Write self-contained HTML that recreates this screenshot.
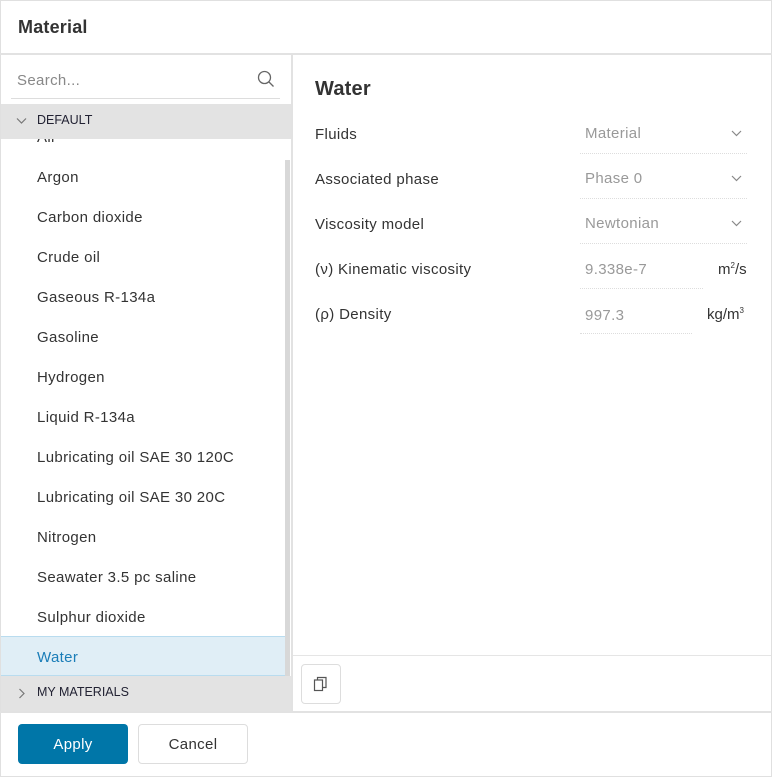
<!DOCTYPE html>
<html><head><style>
*{box-sizing:border-box;margin:0;padding:0}
body{width:772px;height:777px;background:#fff;font-family:"Liberation Sans",sans-serif;color:#333;position:relative;overflow:hidden;letter-spacing:0.35px}
.frame{position:absolute;left:0;top:0;width:772px;height:777px;border:1px solid #e0e0e0}
.hdr{position:absolute;left:18px;top:17px;font-size:18px;font-weight:bold;color:#333;letter-spacing:0.2px}
.hline{position:absolute;left:0;top:53px;width:772px;height:2px;background:#e2e2e2}
.left{position:absolute;left:1px;top:55px;width:290px;height:656px;overflow:hidden}
.sep{position:absolute;left:291px;top:55px;width:2px;height:656px;background:#e2e2e2}
.search{position:absolute;left:16px;top:17px;font-size:15px;color:#888}
.sline{position:absolute;left:10px;top:43px;width:269px;height:1px;background:#ddd}
.grp{position:absolute;left:0;width:290px;height:35px;background:#e3e3e3;font-size:12.5px;color:#223;letter-spacing:0}
.grp span{position:absolute;left:36px;top:9px}
.item{position:absolute;left:0;width:284px;height:40px;font-size:15px;padding:13px 0 0 36px;color:#333}
.sel{background:#e0eef6;border-top:1px solid #b9dcef;border-bottom:1px solid #b9dcef;color:#1a7db8;padding-top:12px}
.sb{position:absolute;left:284px;top:105px;width:5px;height:516px;background:#d8d8d8}
.lbl{position:absolute;left:315px;font-size:15px;color:#333}
.val{position:absolute;left:585px;font-size:15px;color:#999}
.ul{position:absolute;left:580px;height:1px;border-top:1px dotted #ddd}
.chev{position:absolute;left:731px}
.btn{position:absolute;top:724px;height:40px;border-radius:4px;font-size:15px;text-align:center;line-height:42px}
</style></head><body>
<div class="frame"></div>
<div class="hdr">Material</div>
<div class="hline"></div>
<div class="left">
 <div class="search">Search...</div>
 <svg style="position:absolute;left:256px;top:15px" width="18" height="18" viewBox="0 0 18 18"><circle cx="7.5" cy="7.5" r="6" fill="none" stroke="#666" stroke-width="1.3"/><line x1="12" y1="12" x2="16.5" y2="16.5" stroke="#666" stroke-width="1.3"/></svg>
 <div class="sline"></div>
 <div class="item" style="top:61px">Air</div>
 <div class="item" style="top:101px">Argon</div>
 <div class="item" style="top:141px">Carbon dioxide</div>
 <div class="item" style="top:181px">Crude oil</div>
 <div class="item" style="top:221px">Gaseous R-134a</div>
 <div class="item" style="top:261px">Gasoline</div>
 <div class="item" style="top:301px">Hydrogen</div>
 <div class="item" style="top:341px">Liquid R-134a</div>
 <div class="item" style="top:381px">Lubricating oil SAE 30 120C</div>
 <div class="item" style="top:421px">Lubricating oil SAE 30 20C</div>
 <div class="item" style="top:461px">Nitrogen</div>
 <div class="item" style="top:501px">Seawater 3.5 pc saline</div>
 <div class="item" style="top:541px">Sulphur dioxide</div>
 <div class="item sel" style="top:581px">Water</div>
 <div class="sb"></div>
 <div class="grp" style="top:49px"><svg style="position:absolute;left:15px;top:13px" width="11" height="8"><path d="M1 1.5L5.5 6L10 1.5" fill="none" stroke="#777" stroke-width="1.2"/></svg><span>DEFAULT</span></div>
 <div class="grp" style="top:621px"><svg style="position:absolute;left:17px;top:12px" width="8" height="12"><path d="M1.5 1L6 5.5L1.5 10" fill="none" stroke="#777" stroke-width="1.2"/></svg><span>MY MATERIALS</span></div>
</div>
<div class="sep"></div>
<div style="position:absolute;left:315px;top:78px;font-size:20px;font-weight:bold;color:#333;letter-spacing:0.2px">Water</div>
<div class="lbl" style="top:126px">Fluids</div>
<div class="lbl" style="top:171px">Associated phase</div>
<div class="lbl" style="top:216px">Viscosity model</div>
<div class="lbl" style="top:261px">(ν) Kinematic viscosity</div>
<div class="lbl" style="top:306px">(ρ) Density</div>
<div class="val" style="top:125px">Material</div>
<div class="val" style="top:170px">Phase 0</div>
<div class="val" style="top:215px">Newtonian</div>
<div class="val" style="top:261px">9.338e-7</div>
<div class="val" style="top:307px">997.3</div>
<div class="ul" style="top:153px;width:167px"></div>
<div class="ul" style="top:198px;width:167px"></div>
<div class="ul" style="top:243px;width:167px"></div>
<div class="ul" style="top:288px;width:123px"></div>
<div class="ul" style="top:333px;width:112px"></div>
<svg class="chev" style="top:130px" width="11" height="7"><path d="M1 1L5.5 5.5L10 1" fill="none" stroke="#888" stroke-width="1.2"/></svg>
<svg class="chev" style="top:175px" width="11" height="7"><path d="M1 1L5.5 5.5L10 1" fill="none" stroke="#888" stroke-width="1.2"/></svg>
<svg class="chev" style="top:220px" width="11" height="7"><path d="M1 1L5.5 5.5L10 1" fill="none" stroke="#888" stroke-width="1.2"/></svg>
<div style="position:absolute;left:718px;top:261px;font-size:15px;letter-spacing:0">m<sup style="font-size:8px">2</sup>/s</div>
<div style="position:absolute;left:707px;top:306px;font-size:15px;letter-spacing:0">kg/m<sup style="font-size:8px">3</sup></div>
<div style="position:absolute;left:293px;top:655px;width:478px;height:1px;background:#e5e5e5"></div>
<div style="position:absolute;left:301px;top:664px;width:40px;height:40px;border:1px solid #ddd;border-radius:4px"></div>
<svg style="position:absolute;left:313px;top:676px" width="16" height="16" viewBox="0 0 16 16"><rect x="1.5" y="4" width="8" height="10.5" fill="#fff" stroke="#555" stroke-width="1.2"/><path d="M4.5 4V1.5H13V11.5H9.5" fill="none" stroke="#555" stroke-width="1.2"/></svg>
<div style="position:absolute;left:0;top:711px;width:772px;height:2px;background:#e2e2e2"></div>
<div class="btn" style="left:18px;width:110px;background:#0076a8;color:#fff">Apply</div>
<div class="btn" style="left:138px;width:110px;border:1px solid #ddd;color:#333;line-height:40px">Cancel</div>
</body></html>
